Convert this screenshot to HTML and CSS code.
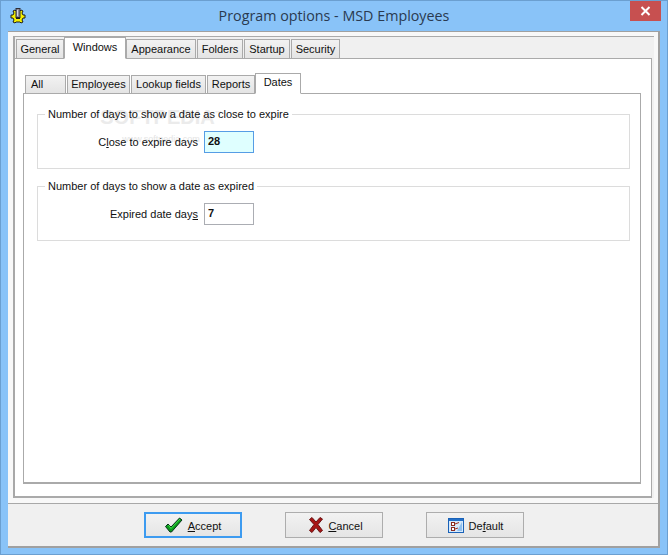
FILE: index.html
```html
<!DOCTYPE html>
<html lang="en">
<head>
<meta charset="utf-8">
<title>Program options - MSD Employees</title>
<link rel="stylesheet" href="styles.css">
</head>
<body>
<div class="window">
  <header class="titlebar">
    <svg class="app-icon" width="16" height="16" viewBox="0 0 16 16">
      <path d="M1 7h2l1-2-1-2 2-1 1 1h4l1-1 2 1-1 2 1 2h2v3h-2l-1 2 1 2-2 1-1-1H6l-1 1-2-1 1-2-1-2H1z" fill="#f4f000" stroke="#1c1c1c" stroke-width="1"/>
      <rect x="6" y="9" width="4" height="2" fill="#1c1c1c"/>
      <rect x="6" y="0.500" width="4" height="9" fill="#8d8d9c" stroke="#2c2c34" stroke-width="1"/>
      <rect x="7" y="2" width="1" height="6" fill="#d8d8e0"/>
    </svg>
    <h1 class="title">Program options - MSD Employees</h1>
    <div class="close"><svg width="11" height="10" viewBox="0 0 11 10"><path d="M1.500 1l8 8M9.500 1l-8 8" stroke="#fff" stroke-width="2"/></svg></div>
  </header>
  <div class="client">
    <div class="upper">
      <div class="frame">
        <div class="tabs tabs-outer">
          <div class="tab w-general">General</div>
          <div class="tab tab-active w-windows">Windows</div>
          <div class="tab w-appearance">Appearance</div>
          <div class="tab w-folders">Folders</div>
          <div class="tab w-startup">Startup</div>
          <div class="tab w-security">Security</div>
        </div>
        <div class="pane">
          <div class="tabs tabs-inner">
            <div class="tab tab-left w-all">All</div>
            <div class="tab w-employees">Employees</div>
            <div class="tab w-lookup">Lookup fields</div>
            <div class="tab w-reports">Reports</div>
            <div class="tab tab-active w-dates">Dates</div>
          </div>
          <div class="inner">
            <div class="watermark"><span class="wm-big">SOFTPEDIA<sup class="wm-tm">™</sup></span><span class="wm-small">www.softpedia.com</span></div>
            <fieldset class="group">
              <legend class="legend">Number of days to show a date as close to expire</legend>
              <div class="row">
                <label class="label">C<u>l</u>ose to expire days</label>
                <input class="field field-focus" value="28" readonly>
              </div>
            </fieldset>
            <fieldset class="group">
              <legend class="legend">Number of days to show a date as expired</legend>
              <div class="row">
                <label class="label">Expired date day<u>s</u></label>
                <input class="field" value="7" readonly>
              </div>
            </fieldset>
          </div>
        </div>
      </div>
    </div>
    <footer class="actions">
      <button class="btn btn-default">
        <svg class="ico-accept" width="18" height="16" viewBox="0 0 18 16"><path d="M0.500 9.500l2.500-2.500 3 3L14.500 1 17 3 6.500 15h-1.500z" fill="#0c9c1c" stroke="#06301a" stroke-width="1" stroke-linejoin="round"/><path d="M3.500 8l2.500 3.500L15 2" fill="none" stroke="#3fe04a" stroke-width="1"/></svg>
        <span class="btn-text"><u>A</u>ccept</span>
      </button>
      <button class="btn">
        <svg class="ico-cancel" width="14" height="16" viewBox="0 0 14 16"><path d="M0.500 2.500L3 0.500l4 4.500L11 0.500l2.500 1.500L9 7.500l4.500 6L11 15.500 7 10.500 3 15.500 0.500 13.500 5 7.500z" fill="#a81414" stroke="#6a1414" stroke-width="1" stroke-linejoin="round"/></svg>
        <span class="btn-text"><u>C</u>ancel</span>
      </button>
      <button class="btn">
        <svg class="ico-default" width="16" height="15" viewBox="0 0 16 15"><rect x="0.500" y="0.500" width="15" height="14" fill="#d6e9fb" stroke="#1a62b8"/><rect x="1" y="1" width="14" height="2" fill="#2470c8"/><path d="M9 13l5-9v9z" fill="#8fc0ef"/><rect x="3.500" y="4.500" width="3" height="3" fill="#fff" stroke="#8a2a20"/><rect x="3.500" y="9.500" width="3" height="3" fill="#fff" stroke="#8a2a20"/><path d="M7 6l4-1.500M7 11l3-1" stroke="#a03020"/></svg>
        <span class="btn-text">De<u>f</u>ault</span>
      </button>
    </footer>
  </div>
</div>
</body>
</html>
```
FILE: styles.css
```css
* { box-sizing: border-box; }
html, body { margin: 0; padding: 0; }
body { font: 11px "Liberation Sans", Arial, sans-serif; color: #111; }
.window {
  width: 668px; height: 555px;
  background: #89c3f8;
  border: 1px solid #6b9fd0;
  padding: 0 7px 6px;
  display: flex; flex-direction: column;
}
.titlebar { height: 30px; display: flex; align-items: center; position: relative; flex: none; }
.app-icon { margin: 0 0 0 2px; flex: none; }
.title {
  margin: 0 0 2px; flex: 1; text-align: center;
  font: 400 14.3px "Open Sans", sans-serif; color: #2a3a50;
  padding-right: 18px;
}
.close {
  position: absolute; right: -1px; top: 0;
  width: 31px; height: 20px; background: #c75050;
  display: flex; align-items: center; justify-content: center;
}
.client {
  flex: 1; display: flex; flex-direction: column;
  background: #f0f0f0;
  border-top: 1px solid #a0a0a0;
  border-right: 2px solid #a0a0a0;
  border-bottom: 2px solid #a0a0a0;
}
.upper {
  flex: 1; padding: 4px 4px 5px 5px;
  background: #f8f8f8;
  border-bottom: 1px solid #a8a8a8;
  display: flex;
}
.frame {
  flex: 1; display: flex; flex-direction: column;
  border-top: 1px solid #aaa;
  border-left: 2px solid #a8a8a8;
  padding-right: 2px;
  background: #f0f0f0;
}
.tabs { display: flex; align-items: flex-end; position: relative; z-index: 1; flex: none; }
.tabs-outer { height: 22px; margin-bottom: -1px; padding-left: 1px; gap: 1px; }
.tabs-inner { height: 21px; margin-bottom: -1px; padding-left: 2px; gap: 1px; }
.tab {
  height: 20px; border: 1px solid #aaa;
  background: linear-gradient(#f2f2f2, #e4e4e4);
  display: flex; align-items: center; justify-content: center;
  font-size: 11px; flex: none;
}
.tabs-inner .tab { height: 19px; padding-bottom: 2px; }
.tab-left { justify-content: flex-start; padding-left: 5px; }
.tabs .tab-active {
  height: 22px; background: #fff; border-bottom-color: #fff;
  padding-bottom: 3px; margin: 0 -1px;
}
.tabs-inner .tab-active { height: 21px; margin-right: 0; }
.w-general { width: 48px; }
.w-windows { width: 62px; }
.w-appearance { width: 70px; }
.w-folders { width: 46px; }
.w-startup { width: 46px; }
.w-security { width: 49px; }
.w-all { width: 41px; }
.w-employees { width: 63px; }
.w-lookup { width: 75px; }
.w-reports { width: 48px; }
.w-dates { width: 46px; }
.pane {
  flex: 1; display: flex; flex-direction: column;
  background: #fff;
  border: 1px solid #aaa; border-left: 0; border-bottom-width: 2px;
  padding: 14px 10px 12px 8px;
}
.inner {
  flex: 1; position: relative;
  background: #fff;
  border: 1px solid #aaa; border-bottom-width: 2px;
  padding: 14px 10px 0 13px;
  display: flex; flex-direction: column; gap: 11px;
}
.watermark {
  position: absolute; left: 62px; top: 13px; width: 150px;
  display: flex; flex-direction: column; align-items: center;
  color: #ebebeb; pointer-events: none;
}
.wm-big { font: 700 20px/20px "Liberation Sans", sans-serif; }
.wm-tm { font-size: 7px; line-height: 0; }
.wm-small { font-size: 9px; line-height: 10px; margin-top: 7px; color: #e4e4e4; }
.group {
  margin: 0; padding: 0; min-width: 0;
  height: 61px; position: relative;
  border: 1px solid #dcdcdc;
}
.legend { padding: 0 3px; margin-left: 7px; font-size: 11px; line-height: 13px; }
.row { display: flex; align-items: center; gap: 6px; padding-top: 10px; }
.label { width: 160px; text-align: right; font-size: 11px; }
.field {
  width: 50px; height: 22px; margin: 0; padding: 0 0 2px 3px;
  border: 1px solid #abadb3; background: #fff;
  font: 700 11px "Liberation Sans", sans-serif; color: #111; outline: 0;
}
.field-focus { background: #dfffff; border-color: #569de5; }
.actions { height: 42px; flex: none; display: flex; gap: 43px; padding: 8px 0 0 136px; background: #f0f0f0; }
.btn {
  width: 98px; height: 26px; padding: 0;
  border: 1px solid #adadad;
  background: linear-gradient(#f2f2f2, #e5e5e5);
  display: flex; align-items: center; justify-content: center; gap: 5px;
  font: 11px "Liberation Sans", sans-serif; color: #111;
}
.btn-text { position: relative; top: 1px; }
.btn-default { border: 2px solid #3d9bf0; }
.ico-cancel { margin-left: 4px; }
.ico-default { margin-left: 1px; }
```
